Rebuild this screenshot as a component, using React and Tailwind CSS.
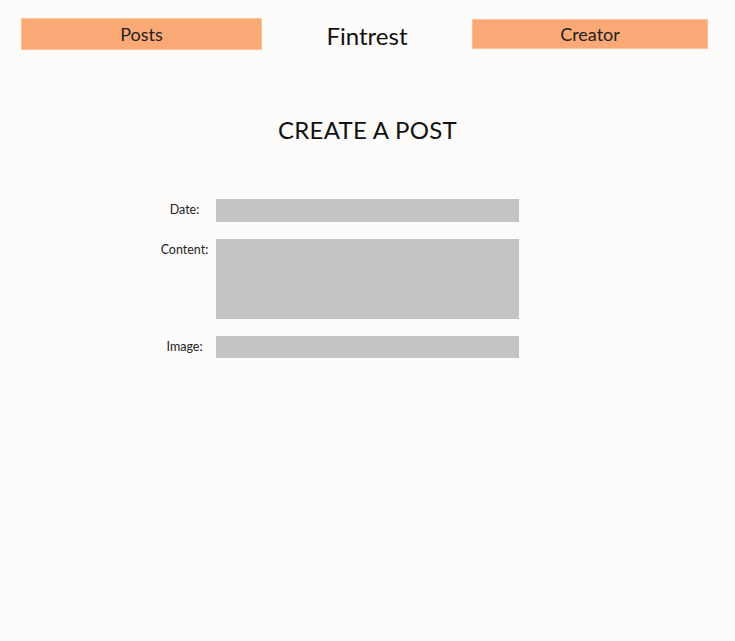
// App.jsx

import React from "react";

// Single form row: centred label on the left, grey field on the right
const Field = ({ label, height }) => (
  <div className="flex items-start">
    <label className="w-[63px] pt-[2px] text-center text-[12.5px] text-[#222]">{label}</label>
    <div className={`w-[303px] bg-[#c4c4c4] ${height}`}></div>
  </div>
);

const App = () => {
  return (
    <div
      className="min-h-[641px] w-full bg-[#fdfcfa] text-[#111]"
      style={{ fontFamily: "Lato, 'Noto Sans', sans-serif" }}
    >
      {/* Header */}
      <header className="flex items-start pl-[21px] pr-[27px]">
        <button className="mt-[18px] h-[32px] w-[241px] bg-[#fba877] border border-[#fcc09c] text-[18px] text-[#222]">
          Posts
        </button>
        <h1 className="flex-1 text-center text-[24px] mt-[20px] leading-[32px]">Fintrest</h1>
        <button className="mt-[19px] h-[30px] w-[236px] bg-[#fba877] border border-[#fcc09c] text-[18px] text-[#222]">
          Creator
        </button>
      </header>

      {/* Title */}
      <h2 className="mt-[62px] text-center text-[24px] leading-[32px] tracking-[0.3px]">CREATE A POST</h2>

      {/* Form */}
      <form className="mt-[53px] ml-[153px] flex flex-col">
        <Field label="Date:" height="h-[23px]" />
        <div className="h-[17px]"></div>
        <Field label="Content:" height="h-[80px]" />
        <div className="h-[17px]"></div>
        <Field label="Image:" height="h-[22px]" />
      </form>
    </div>
  );
};

export default App;
